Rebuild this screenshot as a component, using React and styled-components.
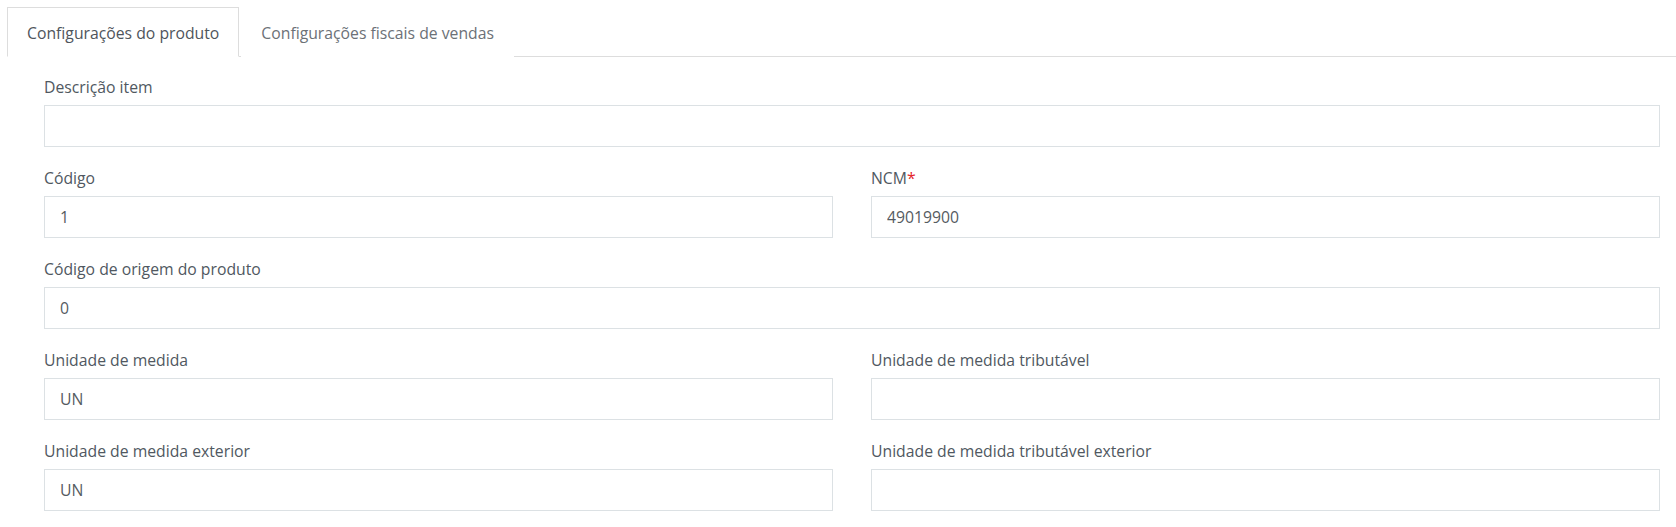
import React from "react";
import styled, { createGlobalStyle } from "styled-components";

const GlobalStyle = createGlobalStyle`
  html, body {
    margin: 0;
    padding: 0;
    background: #ffffff;
  }
  body {
    font-family: "Open Sans", "Noto Sans", "Liberation Sans", sans-serif;
    font-size: 15.75px;
    color: #555;
  }
  * { box-sizing: border-box; }
`;

const Page = styled.div`
  width: 1676px;
  height: 527px;
  background: #fff;
  padding-top: 7px;
  overflow: hidden;
`;

const TabList = styled.ul`
  display: flex;
  margin: 0 0 0 7px;
  padding: 0;
  list-style: none;
  border-bottom: 1px solid #dddddd;
`;

const Tab = styled.li`
  margin: 0 2px -1px 0;
  padding: 15px 19px 13px;
  line-height: 20px;
  font-size: 15.75px;
  border: 1px solid ${(p) => (p.$active ? "#dddddd" : "transparent")};
  border-bottom-color: ${(p) => (p.$active ? "#ffffff" : "transparent")};
  background: #fff;
  color: ${(p) => (p.$active ? "#4f555c" : "#6c7177")};
  cursor: pointer;
  white-space: nowrap;
`;

const Form = styled.form`
  display: grid;
  grid-template-columns: 1fr 1fr;
  column-gap: 38px;
  row-gap: 20px;
  padding: 19px 16px 0 44px;
`;

const Field = styled.div`
  grid-column: ${(p) => (p.$full ? "1 / -1" : "auto")};
  display: flex;
  flex-direction: column;
`;

const Label = styled.label`
  display: block;
  line-height: 22px;
  margin-bottom: 7px;
  color: #505861;
  font-size: 15.75px;
`;

const Required = styled.span`
  color: #e4242b;
`;

const Input = styled.input`
  height: 42px;
  width: 100%;
  padding: 0 15px;
  border: 1px solid #dce1e4;
  border-radius: 0;
  background: #fff;
  font-family: "Open Sans", "Noto Sans", "Liberation Sans", sans-serif;
  font-size: 15.75px;
  color: #555b61;
  outline: none;
`;

const fields = [
  { label: "Descrição item", value: "", full: true },
  { label: "Código", value: "1" },
  { label: "NCM", value: "49019900", required: true },
  { label: "Código de origem do produto", value: "0", full: true },
  { label: "Unidade de medida", value: "UN" },
  { label: "Unidade de medida tributável", value: "" },
  { label: "Unidade de medida exterior", value: "UN" },
  { label: "Unidade de medida tributável exterior", value: "" },
];

export default function App() {
  return (
    <>
      <GlobalStyle />
      <Page>
        <TabList>
          <Tab $active>Configurações do produto</Tab>
          <Tab>Configurações fiscais de vendas</Tab>
        </TabList>
        <Form onSubmit={(e) => e.preventDefault()}>
          {fields.map((f, i) => (
            <Field key={i} $full={f.full}>
              <Label>
                {f.label}
                {f.required && <Required>*</Required>}
              </Label>
              <Input readOnly value={f.value} />
            </Field>
          ))}
        </Form>
      </Page>
    </>
  );
}
